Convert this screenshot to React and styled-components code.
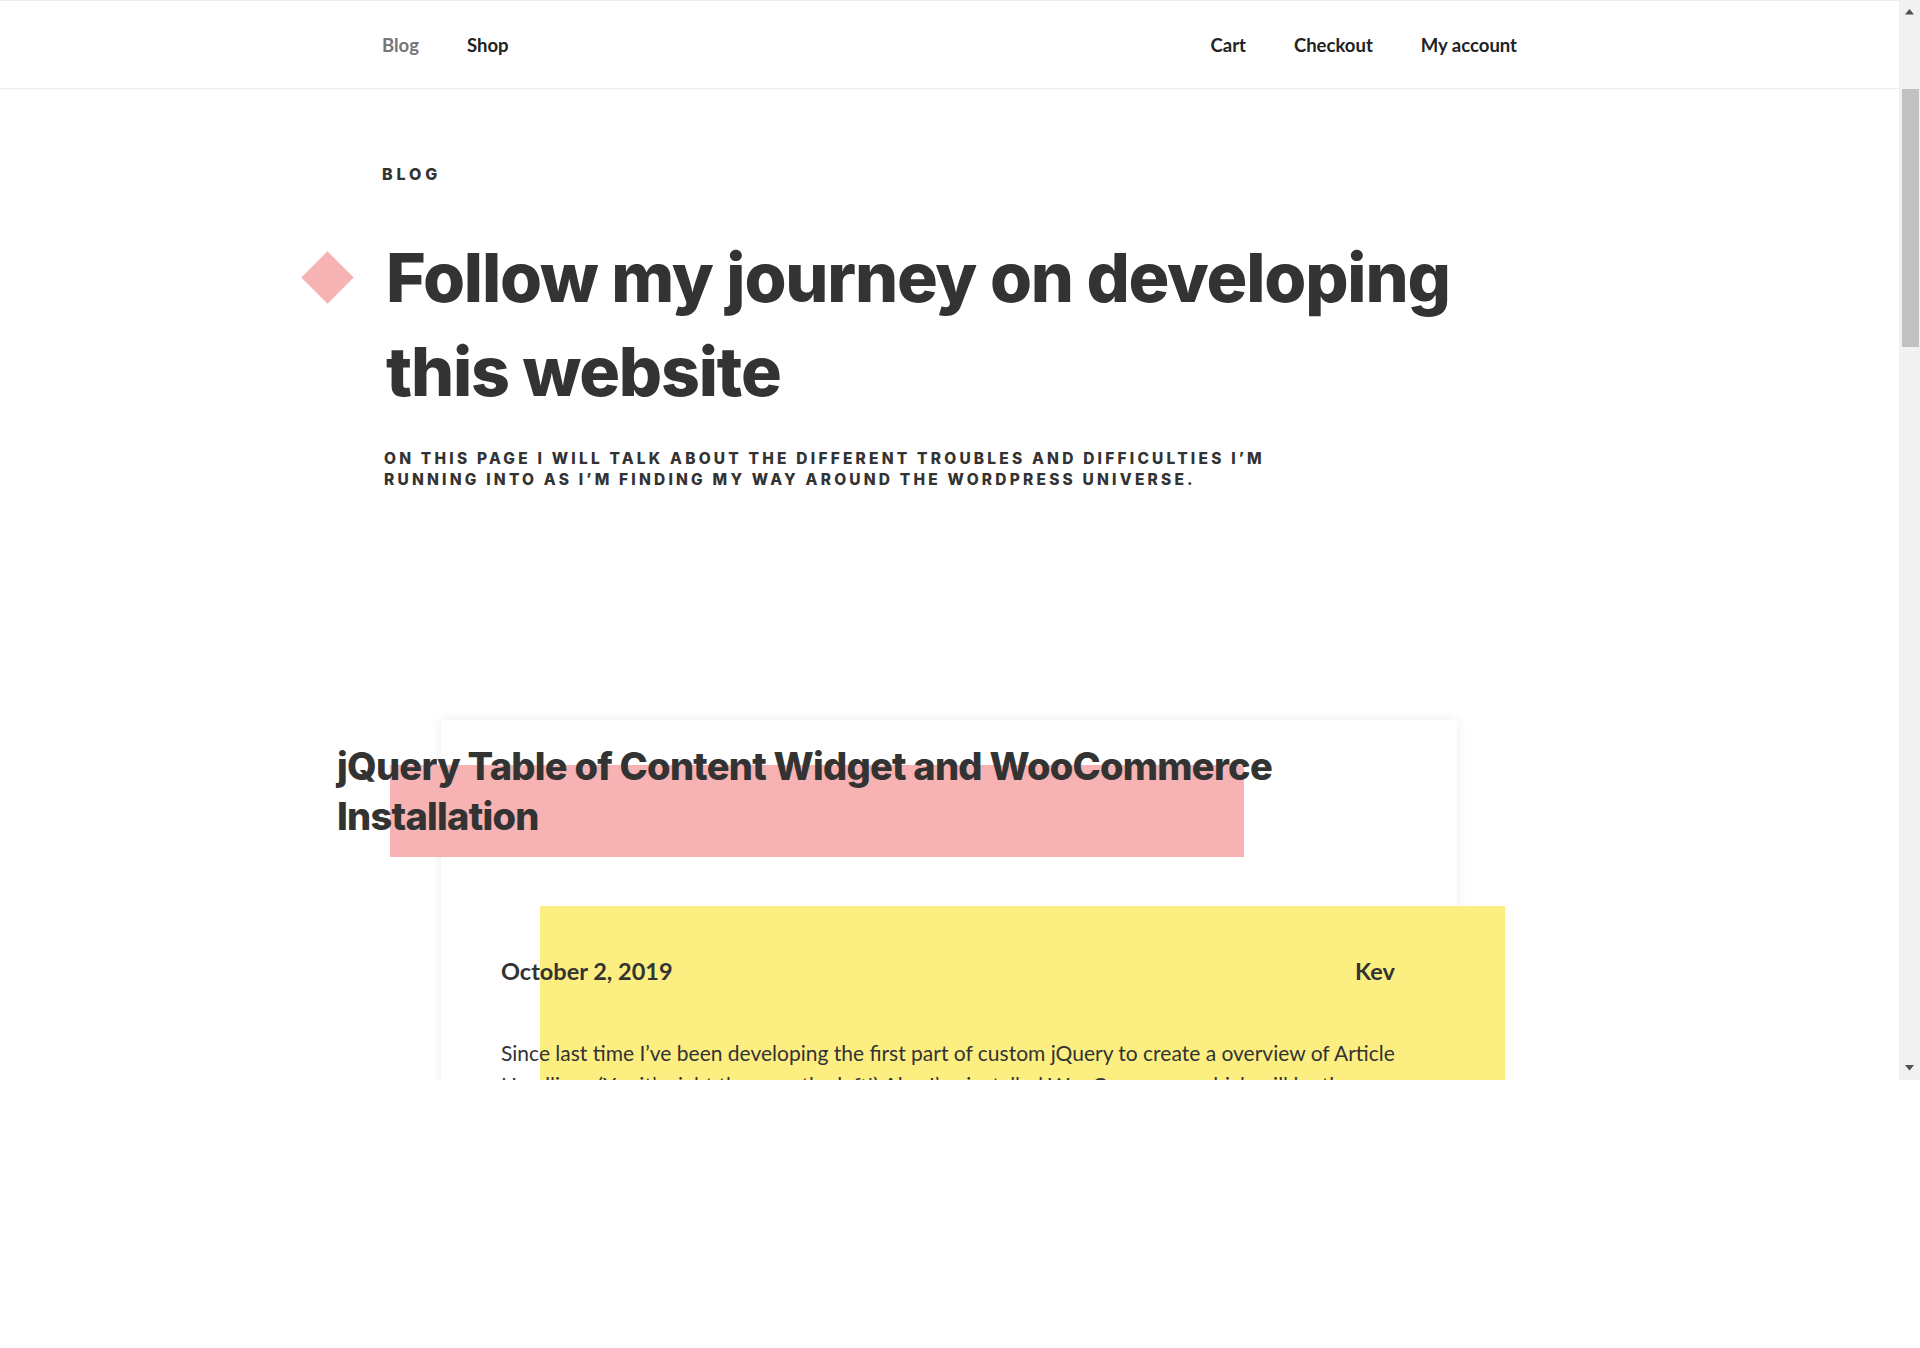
import React from 'react';
import styled, { createGlobalStyle } from 'styled-components';

const GlobalStyle = createGlobalStyle`
  html, body {
    margin: 0;
    padding: 0;
    background: #ffffff;
  }
  * {
    box-sizing: border-box;
  }
`;

const Viewport = styled.div`
  display: flex;
  width: 1920px;
  height: 1080px;
  overflow: hidden;
  background: #ffffff;
`;

const Main = styled.div`
  flex: 1;
  min-width: 0;
  overflow: hidden;
  border-top: 1px solid #ececec;
`;

const Header = styled.header`
  height: 88px;
  border-bottom: 1px solid #eeeeee;
  box-shadow: 0 1px 2px rgba(0, 0, 0, 0.02);
`;

const Container = styled.div`
  width: 1135px;
  margin: 0 auto;
`;

const NavBar = styled(Container)`
  display: flex;
  align-items: center;
  justify-content: space-between;
  height: 100%;
`;

const Menu = styled.nav`
  display: flex;
  align-items: center;
  gap: 48px;
`;

const MenuLink = styled.a`
  font-family: Lato, 'Noto Sans', sans-serif;
  font-size: 18.5px;
  font-weight: 700;
  color: ${({ $muted }) => ($muted ? '#767676' : '#222222')};
  text-decoration: none;
`;

const Eyebrow = styled.div`
  margin-top: 75px;
  font-family: Inter, 'Liberation Sans', sans-serif;
  font-size: 16px;
  line-height: 20px;
  font-weight: 800;
  letter-spacing: 3.9px;
  color: #333333;
`;

const Title = styled.h1`
  position: relative;
  margin: 46px 0 0 4px;
  max-width: 1120px;
  font-family: Inter, 'Liberation Sans', sans-serif;
  font-size: 68px;
  line-height: 94px;
  font-weight: 800;
  letter-spacing: -1.2px;
  color: #333333;

  &::before {
    content: '';
    position: absolute;
    left: -77px;
    top: 29px;
    width: 37px;
    height: 37px;
    background: #f7b3b3;
    transform: rotate(45deg);
  }
`;

const Subtitle = styled.p`
  margin: 30px 0 0 2px;
  max-width: 920px;
  font-family: Inter, 'Liberation Sans', sans-serif;
  font-size: 15.5px;
  line-height: 21px;
  font-weight: 800;
  letter-spacing: 3.2px;
  text-transform: uppercase;
  color: #333333;
`;

const Card = styled.article`
  position: relative;
  margin: 230px 0 0 59px;
  width: 1016px;
  padding: 21px 62px 0 60px;
  min-height: 600px;
  background: #ffffff;
  box-shadow: 0 0 12px rgba(0, 0, 0, 0.08);
`;

const Block = styled.div`
  position: absolute;
  z-index: 0;
  background: ${({ $color }) => $color};
`;

const PostTitle = styled.h2`
  position: relative;
  z-index: 1;
  margin: 0 0 0 -164px;
  max-width: 1000px;
  font-family: Inter, 'Liberation Sans', sans-serif;
  font-size: 38px;
  line-height: 50px;
  font-weight: 800;
  letter-spacing: -0.75px;
  color: #333333;
`;

const Meta = styled.div`
  position: relative;
  z-index: 1;
  display: flex;
  justify-content: space-between;
  margin-top: 115px;
  font-family: Lato, 'Noto Sans', sans-serif;
  font-size: 23.5px;
  line-height: 30px;
  font-weight: 700;
  color: #333333;
`;

const Excerpt = styled.p`
  position: relative;
  z-index: 1;
  margin: 51px 0 0;
  font-family: Lato, 'Noto Sans', sans-serif;
  font-size: 21px;
  line-height: 32px;
  font-weight: 400;
  color: #333333;
`;

const Scrollbar = styled.div`
  display: flex;
  flex-direction: column;
  align-items: center;
  width: 21px;
  flex-shrink: 0;
  background: #f1f1f1;
`;

const Arrow = styled.div`
  display: flex;
  align-items: center;
  justify-content: center;
  width: 21px;
  height: 24px;
`;

const Thumb = styled.div`
  margin: 65px 0 0 1px;
  width: 17px;
  height: 258px;
  background: #c1c1c1;
`;

const Spacer = styled.div`
  flex: 1;
`;

const Triangle = ({ down }) => (
  <svg width="9" height="6" viewBox="0 0 9 6">
    <path d={down ? 'M0 0 H9 L4.5 5.5 Z' : 'M0 5.5 H9 L4.5 0 Z'} fill="#505050" />
  </svg>
);

const App = () => (
  <>
    <GlobalStyle />
    <Viewport>
      <Main>
        <Header>
          <NavBar>
            <Menu>
              <MenuLink href="#" $muted>Blog</MenuLink>
              <MenuLink href="#">Shop</MenuLink>
            </Menu>
            <Menu>
              <MenuLink href="#">Cart</MenuLink>
              <MenuLink href="#">Checkout</MenuLink>
              <MenuLink href="#">My account</MenuLink>
            </Menu>
          </NavBar>
        </Header>
        <Container>
          <Eyebrow>BLOG</Eyebrow>
          <Title>Follow my journey on developing this website</Title>
          <Subtitle>
            On this page I will talk about the different troubles and difficulties I’m running into as I’m
            finding my way around the WordPress universe.
          </Subtitle>
          <Card>
            <Block $color="#f7b3b3" style={{ left: -51, top: 45, width: 854, height: 92 }} />
            <Block $color="#fcee80" style={{ left: 99, top: 186, width: 965, height: 420 }} />
            <PostTitle>jQuery Table of Content Widget and WooCommerce Installation</PostTitle>
            <Meta>
              <span>October 2, 2019</span>
              <span>Kev</span>
            </Meta>
            <Excerpt>
              Since last time I’ve been developing the first part of custom jQuery to create a overview of Article
              Headlines (Yes it’s right there on the left!) Also I’ve installed WooCommerce which will be the
              base of the shop I’m building.
            </Excerpt>
          </Card>
        </Container>
      </Main>
      <Scrollbar>
        <Arrow><Triangle /></Arrow>
        <Thumb />
        <Spacer />
        <Arrow><Triangle down /></Arrow>
      </Scrollbar>
    </Viewport>
  </>
);

export default App;
